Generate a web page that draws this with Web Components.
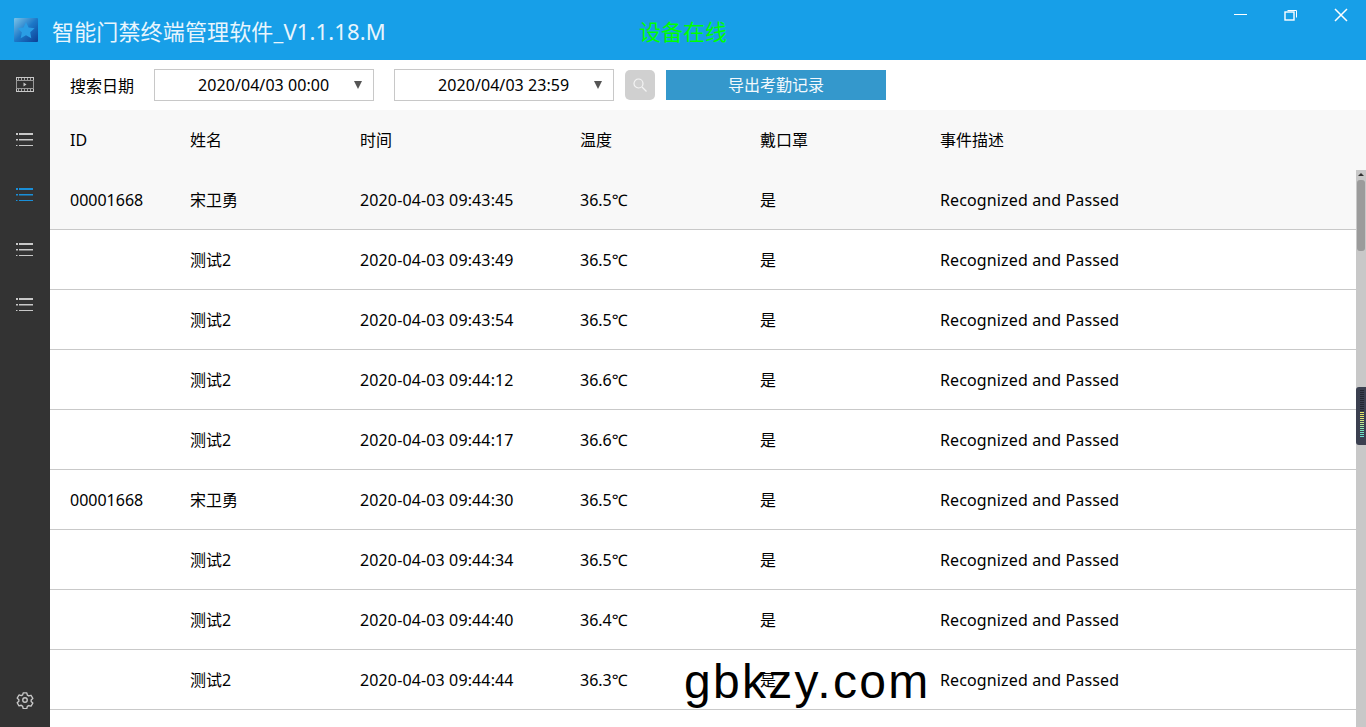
<!DOCTYPE html>
<html>
<head>
<meta charset="utf-8">
<title>智能门禁终端管理软件</title>
<style>
html, body { margin: 0; height: 100%; overflow: hidden; background: #fff; }
body { font-family: "Noto Sans", "Noto Sans CJK SC", sans-serif; font-size: 16px; color: #000; }
</style>
</head>
<body>
<app-window></app-window>

<script>
class TitleBar extends HTMLElement {
    constructor() {
        super();
        this.attachShadow({mode: "open"});
    }
    connectedCallback() {
        this.shadowRoot.innerHTML = `
        <style>
        :host { display: flex; height: 60px; background: #179fe8; color: #fff; align-items: flex-start; flex: none; }
        .logo { width: 24px; height: 24px; margin: 18px 14px 0 14px; flex: none; filter: blur(.6px); }
        .name { width: 587px; flex: none; font-size: 22px; line-height: 30px; margin-top: 16px; letter-spacing: .15px; color: #e8f5fd; white-space: nowrap; }
        .status { flex: 1; font-size: 22px; line-height: 30px; margin-top: 16px; color: #00ff00; white-space: nowrap; }
        .btn { width: 50px; height: 30px; display: flex; align-items: center; justify-content: center; flex: none; }
        svg { display: block; }
        </style>
        <svg class="logo" viewBox="0 0 24 24">
            <defs><linearGradient id="g" x1="0" y1="0" x2="1" y2="1">
                <stop offset="0" stop-color="#7cc4e8"/><stop offset="0.5" stop-color="#1c78c8"/><stop offset="1" stop-color="#0c3f95"/>
            </linearGradient></defs>
            <rect width="24" height="24" rx="1" fill="url(#g)"/>
            <path d="M12 4l2.600 5.400 6 .8-4.400 4.100 1.100 5.900L12 17.300l-5.300 2.900 1.100-5.900-4.400-4.100 6-.8z" fill="#2a9de4"/>
        </svg>
        <div class="name">智能门禁终端管理软件_V1.1.18.M</div>
        <div class="status">设备在线</div>
        <div class="btn"><svg width="14" height="2"><rect width="13" height="1" y="0" fill="#fff"/></svg></div>
        <div class="btn"><svg width="14" height="12" viewBox="0 0 14 12" fill="none" stroke="#fff"><rect x="1" y="3" width="9" height="8" stroke-width="1.4"/><path d="M3.500 1.500h9v7" stroke-width="1"/></svg></div>
        <div class="btn"><svg width="14" height="14" viewBox="0 0 14 14" stroke="#fff" stroke-width="1.5"><path d="M1 1l12 12M13 1L1 13"/></svg></div>
        `;
    }
}

class SideNav extends HTMLElement {
    constructor() {
        super();
        this.attachShadow({mode: "open"});
    }
    listIcon(color) {
        return `<svg width="18" height="14" viewBox="0 0 18 14" fill="${color}">
            <rect x="0" y="0" width="2" height="2"/><rect x="3" y="0" width="14" height="2"/>
            <rect x="0" y="6" width="2" height="1.500"/><rect x="3" y="6" width="14" height="1.500"/>
            <rect x="0" y="12" width="1.500" height="1"/><rect x="3" y="12" width="14" height="1"/>
        </svg>`;
    }
    connectedCallback() {
        this.shadowRoot.innerHTML = `
        <style>
        :host { display: flex; flex-direction: column; width: 50px; background: #333; flex: none; }
        .item { height: 55px; display: flex; align-items: center; justify-content: center; flex: none; }
        .film { height: 52px; box-sizing: border-box; padding-bottom: 3px; }
        .gear { margin-top: auto; height: 54px; display: flex; align-items: center; justify-content: center; }
        svg { display: block; }
        </style>
        <div class="item film"><svg width="18" height="16" viewBox="0 0 18 16" fill="none" stroke="#c8c8c8">
            <rect x="0.500" y="0.500" width="17" height="14"/>
            <rect x="0.500" y="3.500" width="17" height="8" stroke="#999"/>
            <path d="M2 2h1M5 2h1M8 2h1M11 2h1M14 2h1M2 13h1M5 13h1M8 13h1M11 13h1M14 13h1" stroke-width="1.500"/>
            <path d="M7.500 5.500v4l3-2z" fill="#c8c8c8" stroke="none"/>
        </svg></div>
        <div class="item">${this.listIcon("#c8c8c8")}</div>
        <div class="item">${this.listIcon("#1a8fd8")}</div>
        <div class="item">${this.listIcon("#c8c8c8")}</div>
        <div class="item">${this.listIcon("#c8c8c8")}</div>
        <div class="gear"><svg width="18" height="18" viewBox="0 0 24 24" fill="none" stroke="#c8c8c8" stroke-width="1.800" stroke-linejoin="round">
            <circle cx="12" cy="12" r="3"/>
            <path d="M9.600 2.500h4.800l.7 3 1.900 1.100 3-.9 2.400 4.200-2.200 2.100v2l2.200 2.100-2.400 4.200-3-.9-1.900 1.100-.7 3H9.600l-.7-3L7 19l-3 .9-2.400-4.200L3.800 13.600v-2L1.600 9.500 4 5.300l3 .9 1.900-1.100z"/>
        </svg></div>
        `;
    }
}

class DateSelect extends HTMLElement {
    constructor() {
        super();
        this.attachShadow({mode: "open"});
    }
    connectedCallback() {
        this.shadowRoot.innerHTML = `
        <style>
        :host { display: flex; box-sizing: border-box; width: 220px; height: 32px; border: 1px solid #c8c8c8; background: #fff; align-items: center; flex: none; padding-left: 43px; }
        .val { flex: 1; font-size: 16px; letter-spacing: .07px; white-space: nowrap; }
        .arrow { width: 0; height: 0; border-left: 4.500px solid transparent; border-right: 4.500px solid transparent; border-top: 8px solid #555; margin-right: 11px; }
        </style>
        <span class="val"><slot></slot></span><span class="arrow"></span>
        `;
    }
}

class ToolBar extends HTMLElement {
    constructor() {
        super();
        this.attachShadow({mode: "open"});
    }
    connectedCallback() {
        this.shadowRoot.innerHTML = `
        <style>
        :host { display: flex; height: 50px; align-items: center; padding-left: 20px; background: #fff; flex: none; }
        .lbl { width: 84px; flex: none; font-size: 16px; }
        .search { width: 30px; height: 30px; border-radius: 5px; background: #d0d0d0; margin: 0 11px; display: flex; align-items: center; justify-content: center; flex: none; }
        .export { width: 220px; height: 30px; background: #3498cc; color: #f2f8fc; text-align: center; font-size: 16px; line-height: 30px; flex: none; }
        .gap { width: 20px; flex: none; }
        svg { display: block; }
        </style>
        <span class="lbl">搜索日期</span>
        <date-select>2020/04/03 00:00</date-select>
        <span class="gap"></span>
        <date-select>2020/04/03 23:59</date-select>
        <span class="search"><svg width="14" height="14" viewBox="0 0 14 14" fill="none" stroke="#f4f4f4" stroke-width="1.200"><circle cx="5.500" cy="5.500" r="4.500"/><path d="M9 9l4.500 4.500"/></svg></span>
        <span class="export">导出考勤记录</span>
        `;
    }
}

class RecordRow extends HTMLElement {
    constructor() {
        super();
        this.attachShadow({mode: "open"});
    }
    connectedCallback() {
        var cells = (this.getAttribute("data") || "").split("|");
        // columns holding Chinese text sit a pixel higher, the two long ones run a bit wider
        var cls = this.hasAttribute("head") ? ["", "up", "up", "up", "up", "up"] : ["", "up", "wide", "", "up", "wide"];
        this.shadowRoot.innerHTML = `
        <style>
        :host { display: grid; grid-template-columns: 120px 170px 220px 180px 180px 1fr; box-sizing: border-box; height: 60px; padding-left: 20px; align-items: center; border-bottom: 1px solid #c9c9c9; flex: none; font-size: 16px; white-space: nowrap; }
        :host([head]) { border-bottom: none; background: #f8f8f8; }
        :host([shade]) { background: #f8f8f8; }
        .up { padding-bottom: 2px; }
        .wide { letter-spacing: .13px; }
        </style>
        ${cells.map((c, i) => `<span class="${cls[i] || ""}">${c}</span>`).join("")}
        `;
    }
}

class RecordTable extends HTMLElement {
    constructor() {
        super();
        this.attachShadow({mode: "open"});
    }
    connectedCallback() {
        var rows = [
            ["00001668", "宋卫勇", "09:43:45", "36.5"],
            ["", "测试2", "09:43:49", "36.5"],
            ["", "测试2", "09:43:54", "36.5"],
            ["", "测试2", "09:44:12", "36.6"],
            ["", "测试2", "09:44:17", "36.6"],
            ["00001668", "宋卫勇", "09:44:30", "36.5"],
            ["", "测试2", "09:44:34", "36.5"],
            ["", "测试2", "09:44:40", "36.4"],
            ["", "测试2", "09:44:44", "36.3"],
            ["", "", "", ""]
        ];
        var html = rows.map((r, i) => {
            var data = r[1] ? [r[0], r[1], "2020-04-03 " + r[2], r[3] + "℃", "是", "Recognized and Passed"].join("|") : "";
            return `<record-row ${i == 0 ? "shade" : ""} data="${data}"></record-row>`;
        }).join("");
        var dark = new Array(11).fill("#23262f");
        var lit = ["#e4e46a","#e4e46a","#e4e46a","#dfe67a","#d4e884","#c4e88e","#b4e89a","#a0e8a8","#8ce8b4","#78e6bc","#70e4c4","#6ce0c8","#6cdccc"];
        this.shadowRoot.innerHTML = `
        <style>
        :host { display: flex; flex-direction: column; flex: 1; min-height: 0; overflow: hidden; position: relative; }
        .body { display: flex; flex: 1; min-height: 0; }
        .rows { flex: 1; min-width: 0; overflow: hidden; display: flex; flex-direction: column; }
        .bar { width: 10px; background: #c8c8c8; flex: none; display: flex; flex-direction: column; align-items: center; }
        .up { width: 0; height: 0; border-left: 3px solid transparent; border-right: 3px solid transparent; border-bottom: 3px solid #333; margin: 3px 0 4px; }
        .thumb { width: 8px; height: 71px; background: #9b9b9b; border-radius: 3px; flex: none; }
        .widget { position: absolute; right: 0; top: 277px; width: 10px; height: 58px; background: #3b4050; border-radius: 3px 0 0 3px; display: flex; flex-direction: column; align-items: center; gap: 1px; padding: 3px 0 0 2px; box-sizing: border-box; }
        .widget i { display: block; width: 4px; height: 1px; flex: none; }
        </style>
        <record-row head data="ID|姓名|时间|温度|戴口罩|事件描述"></record-row>
        <div class="body">
            <div class="rows">${html}</div>
            <div class="bar"><span class="up"></span><span class="thumb"></span></div>
        </div>
        <div class="widget">${dark.concat(lit).map(c => `<i style="background:${c}"></i>`).join("")}</div>
        `;
    }
}

class AppWindow extends HTMLElement {
    constructor() {
        super();
        this.attachShadow({mode: "open"});
    }
    connectedCallback() {
        this.shadowRoot.innerHTML = `
        <style>
        :host { display: flex; flex-direction: column; height: 100vh; position: relative; overflow: hidden; }
        .main { display: flex; flex: 1; min-height: 0; }
        .content { flex: 1; min-width: 0; display: flex; flex-direction: column; }
        .mark { position: absolute; left: 684px; top: 652px; font-family: "Liberation Sans", sans-serif; font-size: 48px; line-height: 60px; letter-spacing: 2.300px; color: #000; white-space: nowrap; }
        </style>
        <title-bar></title-bar>
        <div class="main">
            <side-nav></side-nav>
            <div class="content">
                <tool-bar></tool-bar>
                <record-table></record-table>
            </div>
        </div>
        <div class="mark">gbkzy.com</div>
        `;
    }
}

customElements.define("title-bar", TitleBar);
customElements.define("side-nav", SideNav);
customElements.define("date-select", DateSelect);
customElements.define("tool-bar", ToolBar);
customElements.define("record-row", RecordRow);
customElements.define("record-table", RecordTable);
customElements.define("app-window", AppWindow);
</script>
</body>
</html>
